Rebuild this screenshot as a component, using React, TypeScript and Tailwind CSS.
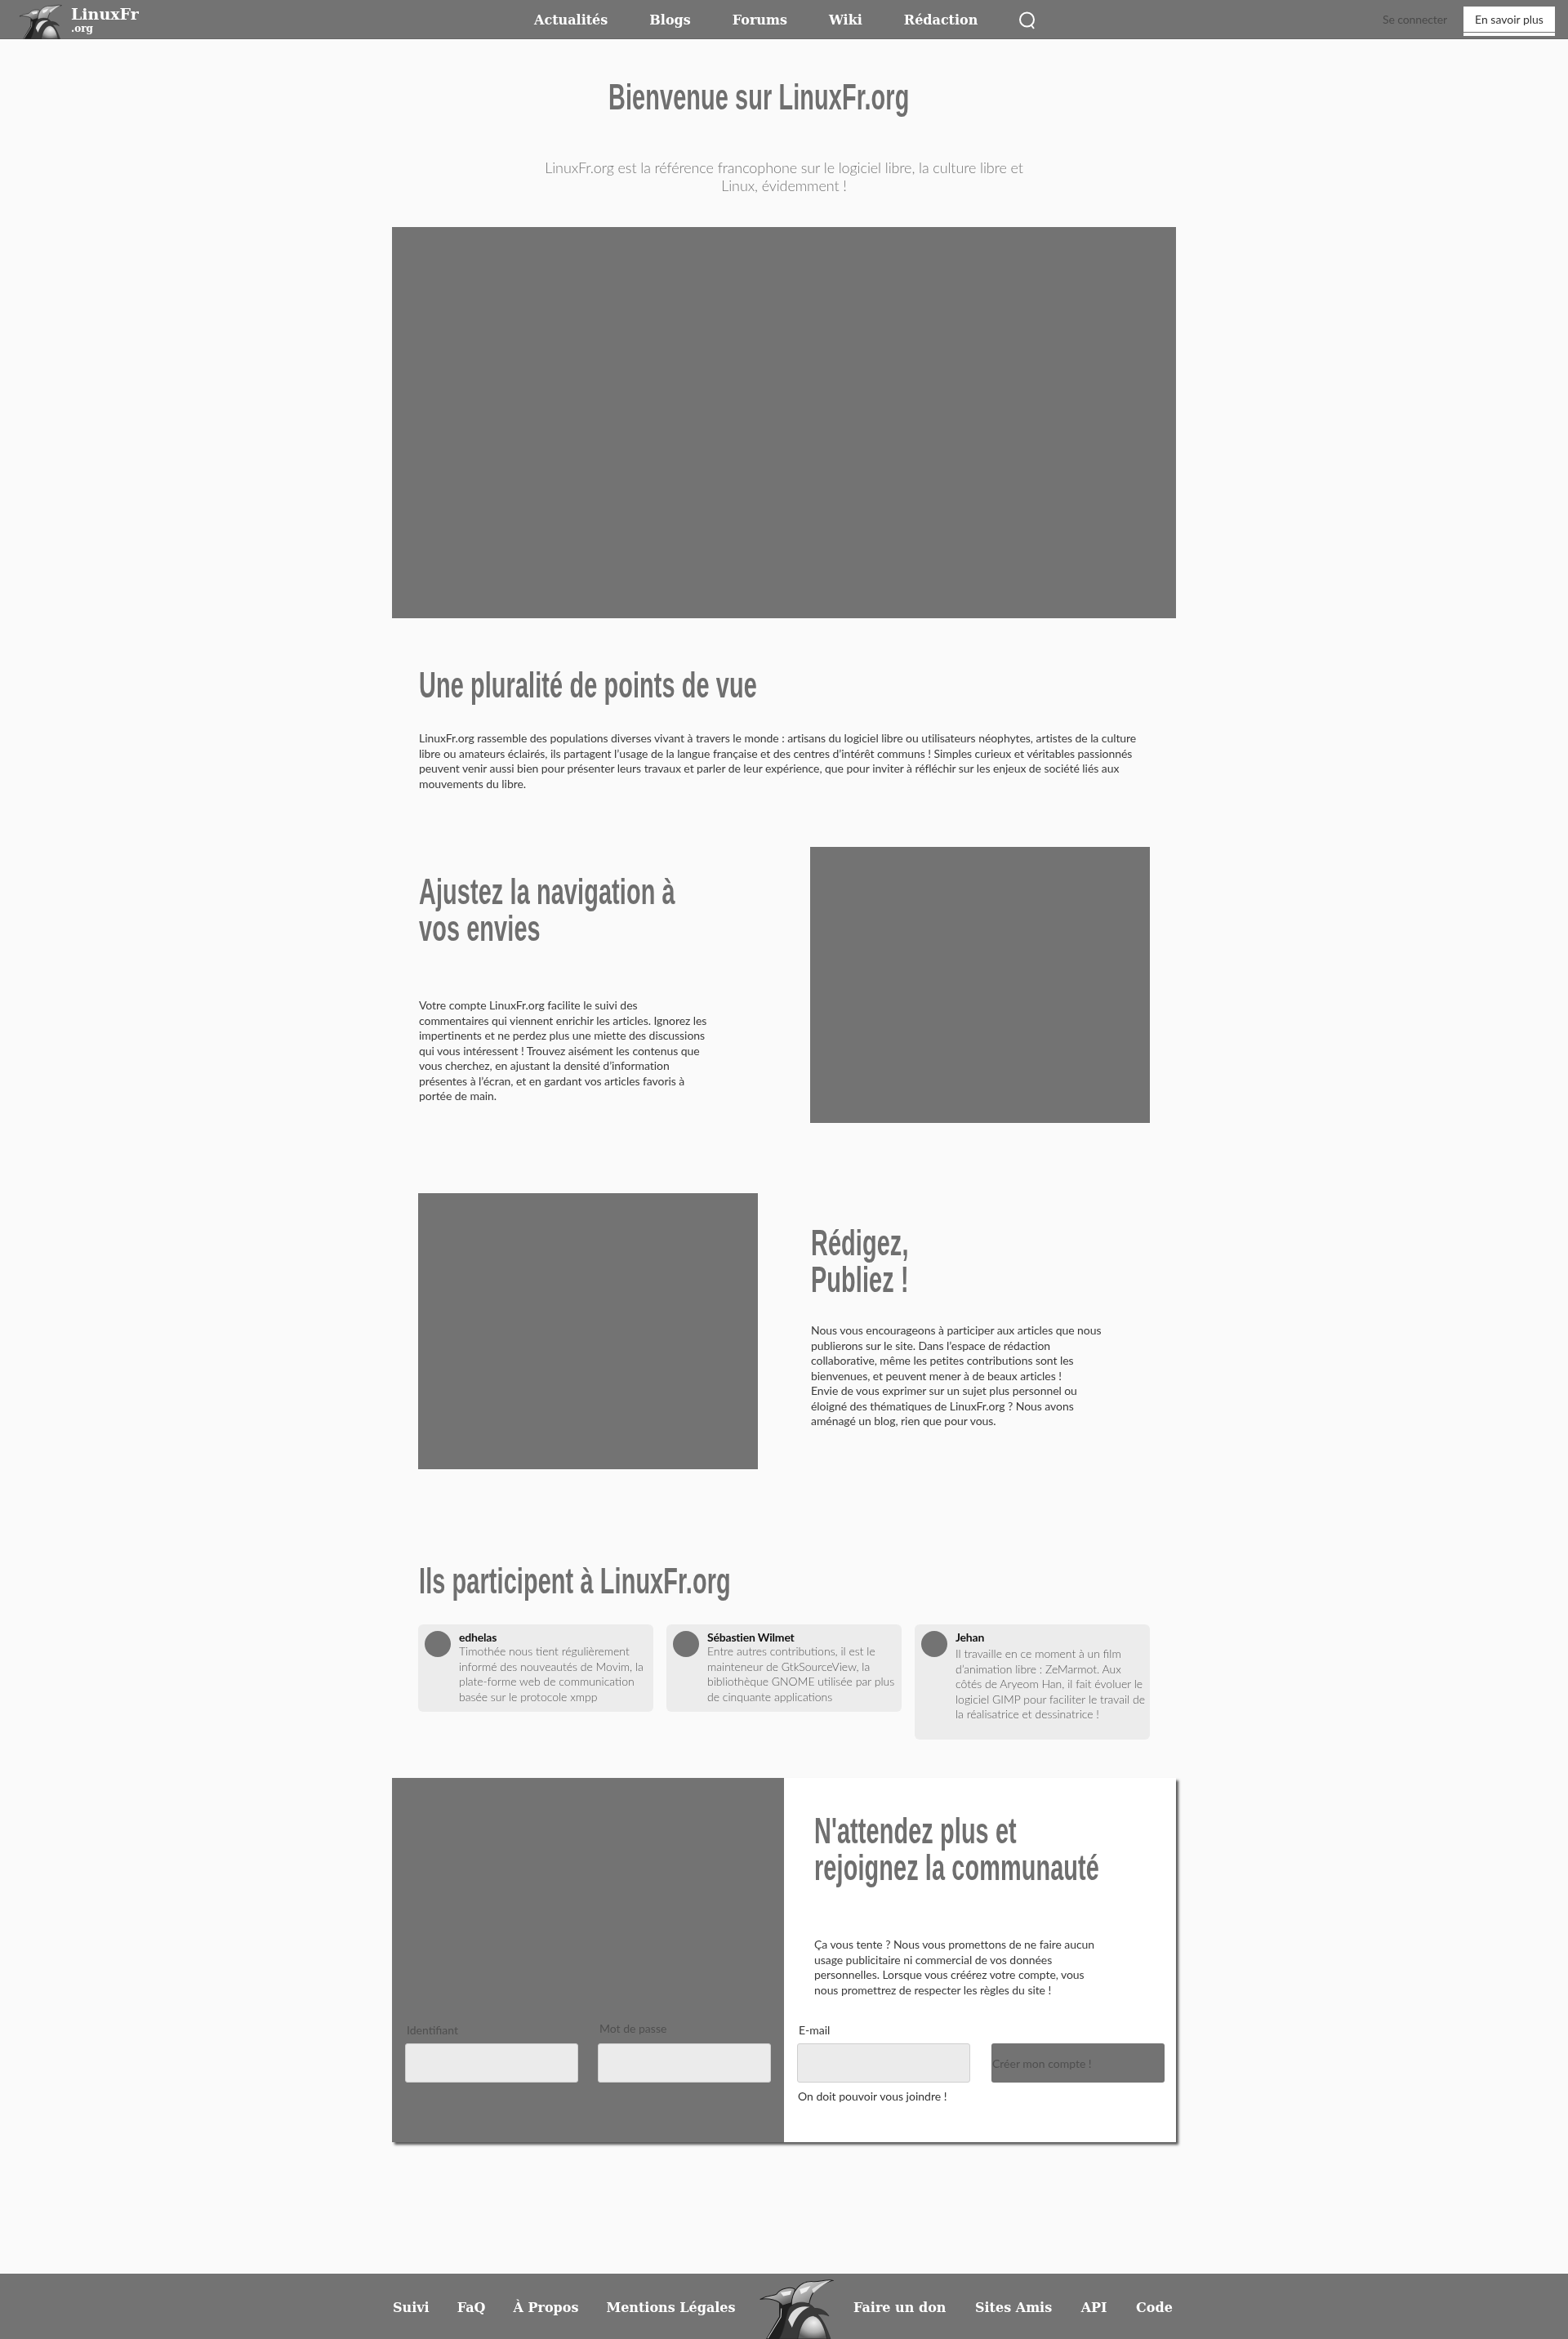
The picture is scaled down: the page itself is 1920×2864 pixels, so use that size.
import React from "react";

const heading = "font-['Liberation_Sans',sans-serif] font-bold text-[#6f6f6f] text-[44px] leading-[45px] whitespace-nowrap origin-left scale-x-[0.655] tracking-[0.2px]";
const serifLink = "font-['DejaVu_Serif',serif] font-bold text-white";
const body = "text-[14px] leading-[18.5px] text-[#3a3a3a] tracking-[-0.06px]";

function Penguin({ id, className }: { id: string; className: string }) {
  return (
    <svg viewBox="85 55 275 227" className={className} aria-hidden="true">
      <defs>
        <radialGradient id={`${id}b`} cx="55%" cy="30%" r="70%">
          <stop offset="0" stopColor="#f0f0f0" />
          <stop offset="0.6" stopColor="#b0b0b0" />
          <stop offset="1" stopColor="#5a5a5a" />
        </radialGradient>
        <linearGradient id={`${id}h`} x1="0" y1="0" x2="1" y2="1">
          <stop offset="0" stopColor="#e8e8e8" />
          <stop offset="0.55" stopColor="#9a9a9a" />
          <stop offset="1" stopColor="#3a3a3a" />
        </linearGradient>
      </defs>
      <path d="M112 282 L160 200 L160 150 L205 135 L232 282 Z" fill="#1f1f1f" />
      <path d="M118 280 L166 202 L168 170" fill="none" stroke="#d8d8d8" strokeWidth="3" />
      <path d="M90 137 C120 120 140 125 150 118 C165 95 205 90 218 100 L205 150 L172 160 C160 140 120 130 90 137 Z" fill={`url(#${id}h)`} stroke="#1c1c1c" strokeWidth="3" />
      <path d="M165 112 L205 105 L200 120 L175 125 Z" fill="#ececec" />
      <path d="M205 158 C205 105 240 68 285 72 C310 74 335 60 357 68 C332 73 302 90 285 112 C276 125 272 140 270 152 Z" fill={`url(#${id}h)`} stroke="#1c1c1c" strokeWidth="3" />
      <path d="M235 100 L275 88 L260 108 L240 118 Z" fill="#f0f0f0" />
      <path d="M280 100 C300 85 325 72 350 67 C325 80 305 95 285 115 Z" fill="#dcdcdc" />
      <path d="M160 282 C185 240 185 180 200 165 C220 143 265 140 290 170 C310 168 332 180 342 198 C325 190 310 190 300 192 C325 215 340 260 348 282 Z" fill="#3a3a3a" stroke="#2a2a2a" strokeWidth="2" />
      <path d="M193 212 C205 172 235 158 272 165 C250 172 225 192 207 240 Z" fill="#dcdcdc" />
      <path d="M228 282 C236 232 256 198 285 197 C315 205 328 250 335 282 Z" fill={`url(#${id}b)`} stroke="#1c1c1c" strokeWidth="2" />
    </svg>
  );
}

function Card({ name, text, tall }: { name: string; text: string; tall?: boolean }) {
  return (
    <div className={`w-[288px] flex gap-[10px] rounded-[6px] bg-[#ececec] pl-2 pr-1 pt-2 ${tall ? "h-[141px]" : "h-[107px]"}`}>
      <div className="w-8 h-8 rounded-full bg-[#737373] shrink-0" />
      <div className="min-w-0">
        <div className="text-[14px] leading-[16px] font-bold text-[#111] tracking-[-0.2px]">{name}</div>
        <p className={`text-[14px] leading-[18.5px] font-light text-[#555] ${tall ? "mt-[3px]" : ""}`}>{text}</p>
      </div>
    </div>
  );
}

function Input({ label, labelClass }: { label: string; labelClass: string }) {
  return (
    <div className="w-[212px]">
      <label className={`block text-[14px] leading-[18px] ${labelClass}`}>{label}</label>
      <div className="mt-[7px] h-[48px] rounded-[3px] border border-[#cfcfcf] bg-[#ebebeb]" />
    </div>
  );
}

export default function App() {
  return (
    <div className="w-[1920px] h-[2864px] bg-[#fafafa] font-['Lato',sans-serif] grayscale overflow-hidden flex flex-col">
      <header className="h-12 bg-[#737373] border-b border-[#666] flex items-start relative shrink-0">
        <div className="w-[654px] flex items-start shrink-0">
          <Penguin id="a" className="w-[53px] h-[44px] ml-[23px] mt-[4px] shrink-0" />
          <div className={`${serifLink} ml-[11px] mt-[5px]`}>
            <div className="text-[19px] leading-[24px]">LinuxFr</div>
            <div className="text-[12px] leading-[13px]">.org</div>
          </div>
        </div>
        <nav className={`${serifLink} flex items-center gap-[51px] text-[16px] h-[49px]`}>
          <span>Actualités</span>
          <span>Blogs</span>
          <span>Forums</span>
          <span>Wiki</span>
          <span>Rédaction</span>
          <svg viewBox="0 0 24 24" className="w-[24px] h-[24px] text-white ml-[-2px]" fill="none" stroke="currentColor" strokeWidth="2">
            <circle cx="11.5" cy="11" r="8.5" />
            <path d="M17 18l3 4" />
          </svg>
        </nav>
        <div className="ml-auto flex items-start">
          <span className="mt-[15px] text-[14px] leading-[18px] text-[#4a4a4a] font-normal tracking-[-0.1px]">Se connecter</span>
          <div className="ml-[20px] mr-[16px] mt-[8px] w-[112px]">
            <div className="h-[31px] bg-white flex items-center justify-center text-[14px] text-[#333]">En savoir plus</div>
            <div className="h-[4px] bg-white mt-[1px]" />
          </div>
        </div>
      </header>

      <main className="w-[960px] mx-auto grow">
        <h1 className={`${heading} ml-[265px] mt-[47px] leading-[48px]`}>Bienvenue sur LinuxFr.org</h1>
        <p className="mt-[51px] mx-auto w-[600px] text-center text-[18px] leading-[22px] font-light text-[#777] tracking-[-0.1px]">
          LinuxFr.org est la référence francophone sur le logiciel libre, la culture libre et Linux, évidemment !
        </p>
        <div className="mt-[40px] h-[479px] bg-[#737373]" />

        <section className="pl-[33px] pr-[30px]">
          <h2 className={`${heading} mt-[58px] leading-[48px]`}>Une pluralité de points de vue</h2>
          <p className={`mt-[32px] ${body}`}>
            LinuxFr.org rassemble des populations diverses vivant à travers le monde : artisans du logiciel libre ou utilisateurs néophytes, artistes de la culture libre ou amateurs éclairés, ils partagent l’usage de la langue française et des centres d’intérêt communs ! Simples curieux et véritables passionnés peuvent venir aussi bien pour présenter leurs travaux et parler de leur expérience, que pour inviter à réfléchir sur les enjeux de société liés aux mouvements du libre.
          </p>
        </section>

        <section className="mt-[68px] flex pl-[33px]">
          <div className="w-[360px] pt-[32px]">
            <h2 className={heading}>Ajustez la navigation à<br />vos envies</h2>
            <p className={`mt-[63px] ${body}`}>
              Votre compte LinuxFr.org facilite le suivi des<br />commentaires qui viennent enrichir les articles. Ignorez les impertinents et ne perdez plus une miette des discussions qui vous intéressent ! Trouvez aisément les contenus que vous cherchez, en ajustant la densité d’information présentes à l’écran, et en gardant vos articles favoris à portée de main.
            </p>
          </div>
          <div className="ml-[119px] w-[416px] h-[338px] bg-[#737373]" />
        </section>

        <section className="mt-[86px] flex pl-[32px]">
          <div className="w-[416px] h-[338px] bg-[#737373]" />
          <div className="ml-[65px] w-[360px] pt-[38px]">
            <h2 className={heading}>Rédigez,<br />Publiez !</h2>
            <p className={`mt-[31px] ${body}`}>
              Nous vous encourageons à participer aux articles que nous publierons sur le site. Dans l’espace de rédaction collaborative, même les petites contributions sont les bienvenues, et peuvent mener à de beaux articles !<br />
              Envie de vous exprimer sur un sujet plus personnel ou éloigné des thématiques de LinuxFr.org ? Nous avons aménagé un blog, rien que pour vous.
            </p>
          </div>
        </section>

        <section className="pl-[32px]">
          <h2 className={`${heading} leading-[48px] ml-px mt-[113px]`}>Ils participent à LinuxFr.org</h2>
          <div className="mt-[29px] flex items-start gap-4">
            <Card name="edhelas" text="Timothée nous tient régulièrement informé des nouveautés de Movim, la plate-forme web de communication basée sur le protocole xmpp" />
            <Card name="Sébastien Wilmet" text="Entre autres contributions, il est le mainteneur de GtkSourceView, la bibliothèque GNOME utilisée par plus de cinquante applications" />
            <Card tall name="Jehan" text="Il travaille en ce moment à un film d’animation libre : ZeMarmot. Aux côtés de Aryeom Han, il fait évoluer le logiciel GIMP pour faciliter le travail de la réalisatrice et dessinatrice !" />
          </div>
        </section>

        <section className="mt-[47px] h-[446px] flex shadow-[3px_3px_3px_#555]">
          <div className="w-[480px] bg-[#737373] flex gap-6 items-start pl-4 pt-[298px]">
            <Input label="Identifiant" labelClass="text-[#4f4f4f] pl-[2px] mt-[2px]" />
            <Input label="Mot de passe" labelClass="text-[#4f4f4f] pl-[2px] pb-[2px] h-[20px]" />
          </div>
          <div className="w-[480px] bg-white">
            <div className="pl-[37px] pt-[42px]">
              <h2 className={heading}>N'attendez plus et<br />rejoignez la communauté</h2>
              <p className={`mt-[63px] w-[355px] ${body}`}>
                Ça vous tente ? Nous vous promettons de ne faire aucun usage publicitaire ni commercial de vos données personnelles. Lorsque vous créérez votre compte, vous nous promettrez de respecter les règles du site !
              </p>
            </div>
            <div className="mt-[31px] ml-4 flex items-end gap-[26px]">
              <Input label="E-mail" labelClass="text-[#333] pl-[2px]" />
              <div className="w-[212px] h-[48px] rounded-[3px] bg-[#737373] flex items-center text-[14px] text-[#4f4f4f] pl-px">Créer mon compte !</div>
            </div>
            <p className="mt-[8px] ml-[17px] text-[14px] leading-[18px] text-[#333]">On doit pouvoir vous joindre !</p>
          </div>
        </section>
      </main>

      <footer className={`${serifLink} h-20 bg-[#737373] flex justify-center text-[16px] shrink-0`}>
        <div className="w-[960px] flex items-start">
          <div className="flex gap-[34px] mt-[30px] w-[449px] justify-start pl-px">
            <span>Suivi</span><span>FaQ</span><span>À Propos</span><span>Mentions Légales</span>
          </div>
          <Penguin id="f" className="w-[92px] h-[76px] mt-[4px] shrink-0" />
          <div className="flex gap-[35.5px] mt-[30px] ml-[24px]">
            <span>Faire un don</span><span>Sites Amis</span><span>API</span><span>Code</span>
          </div>
        </div>
      </footer>
    </div>
  );
}
